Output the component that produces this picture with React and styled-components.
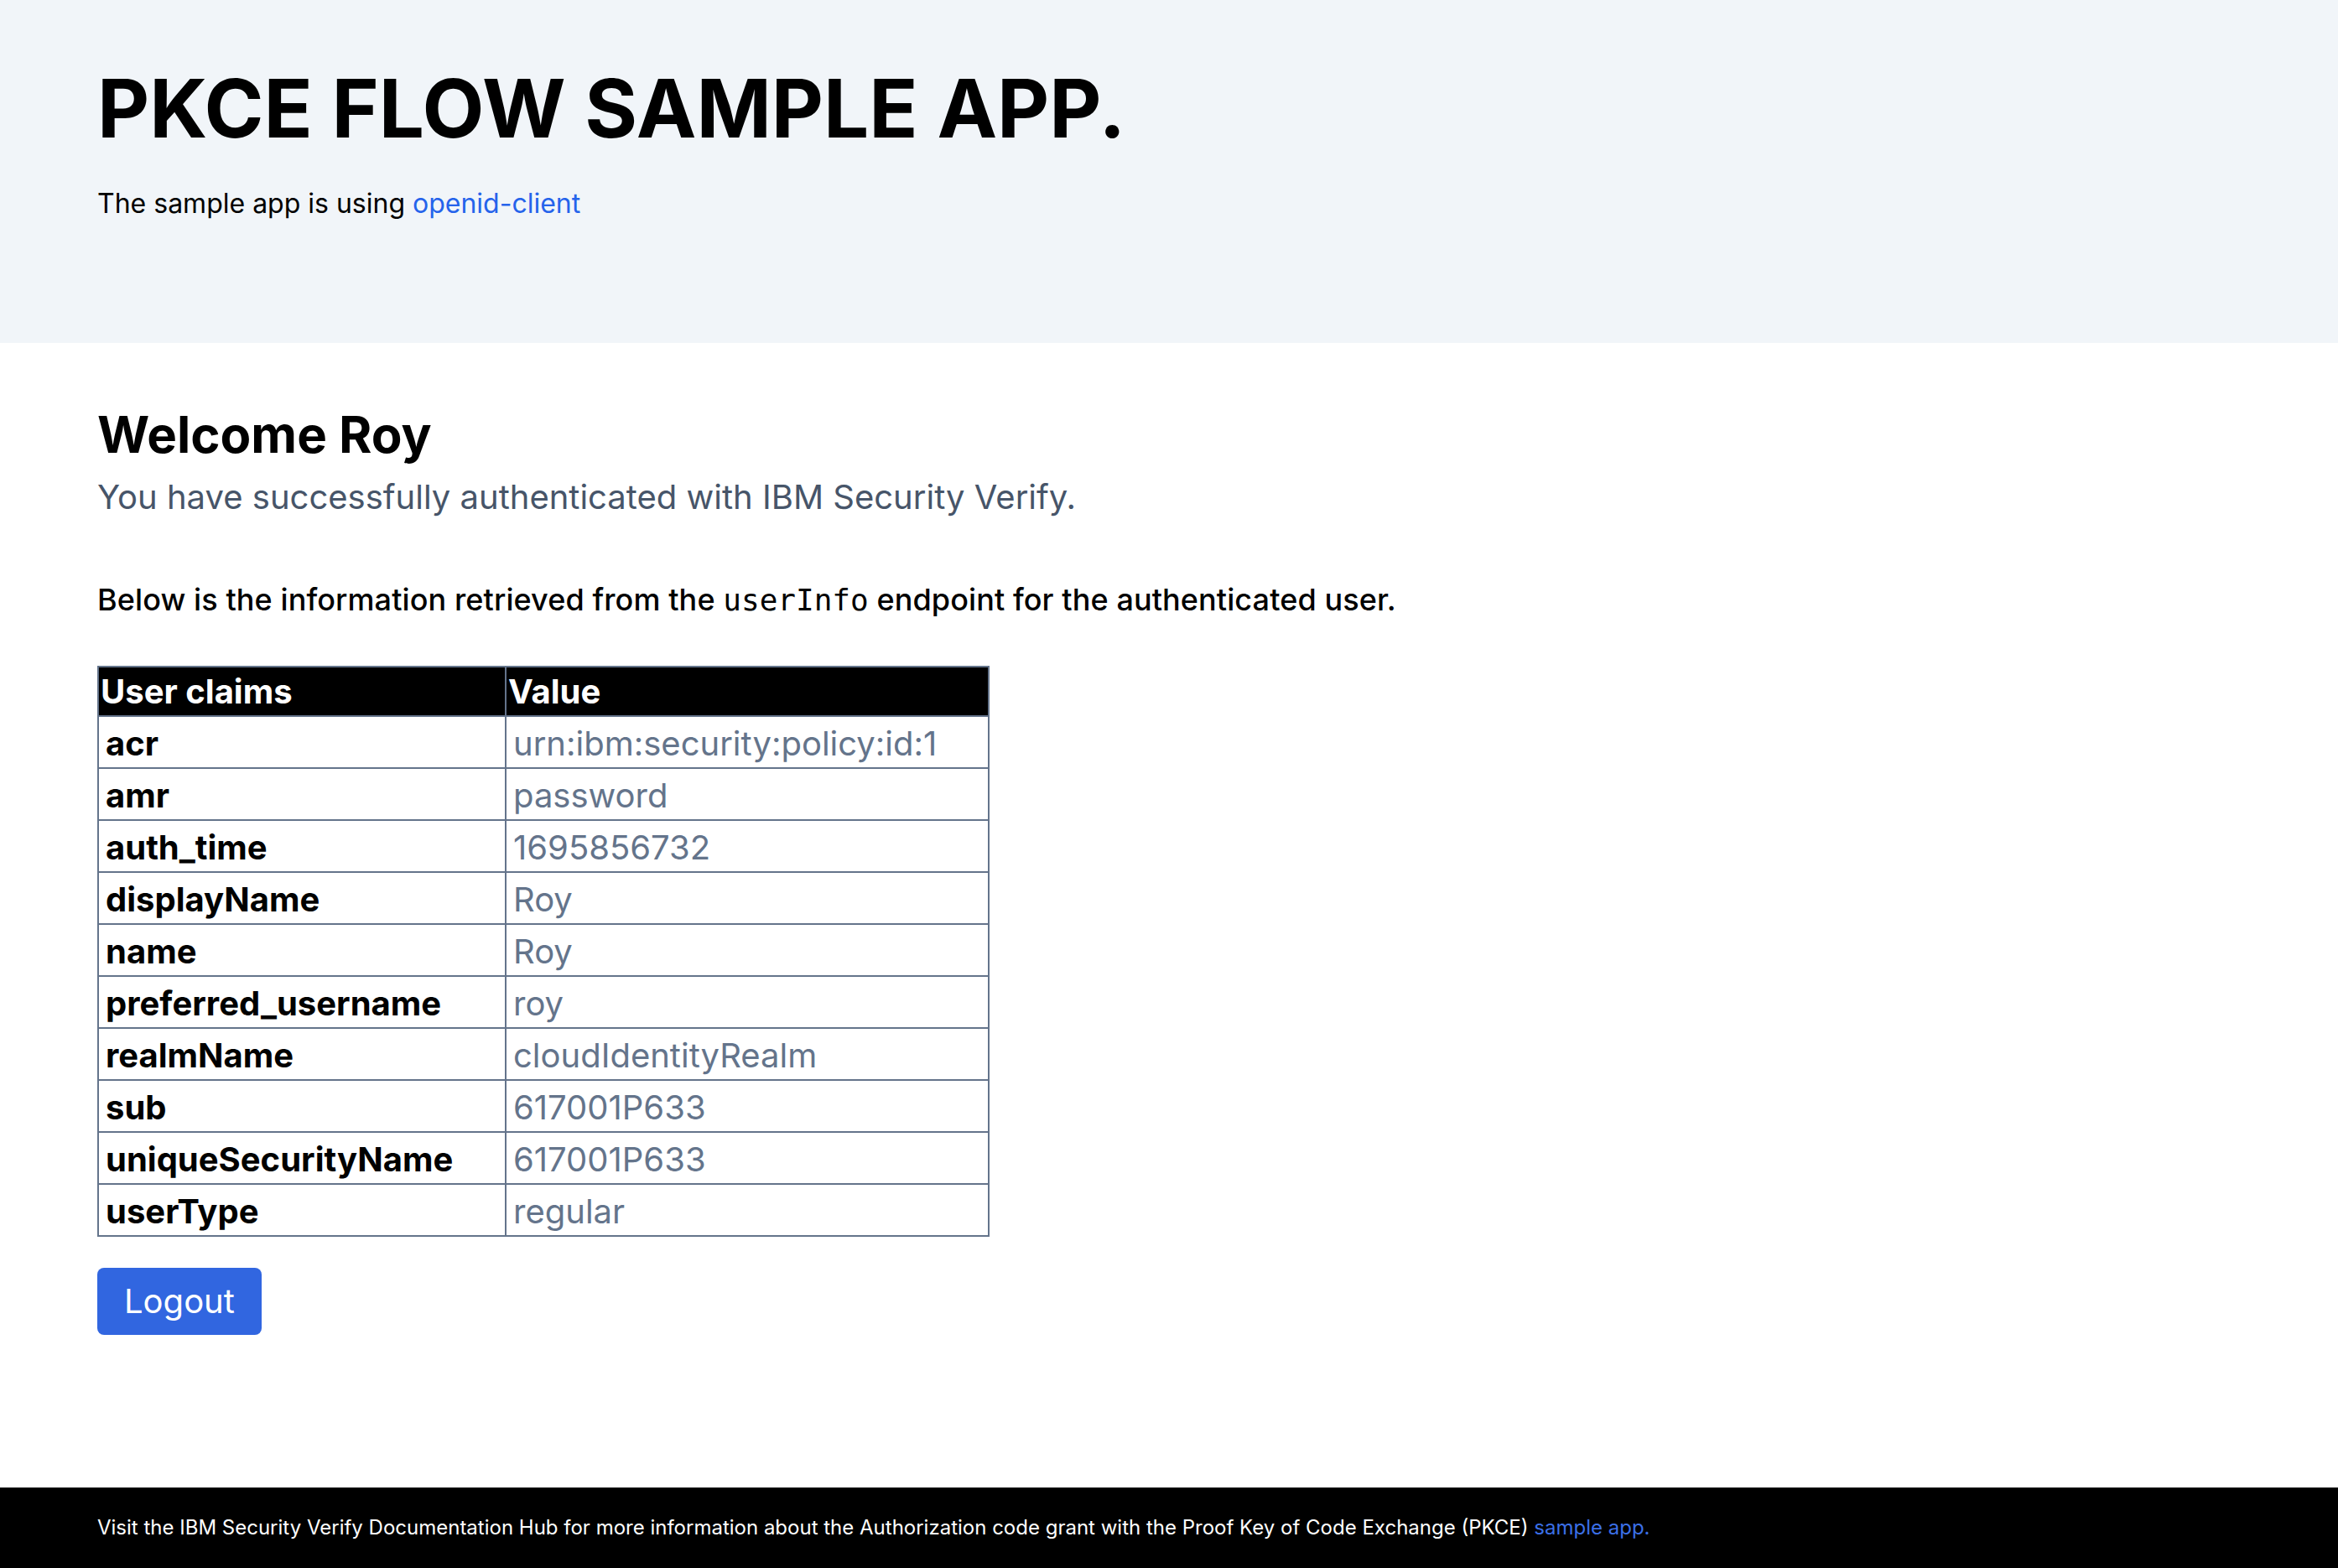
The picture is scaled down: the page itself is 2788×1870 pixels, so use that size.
import React from "react";
import styled, { createGlobalStyle } from "styled-components";

const GlobalStyle = createGlobalStyle`
  html, body { margin: 0; padding: 0; }
  body {
    font-family: Inter, "Noto Sans", "Liberation Sans", sans-serif;
    color: #000;
    background: #fff;
  }
  * { box-sizing: border-box; }
`;

const Page = styled.div`
  min-height: 100vh;
  display: flex;
  flex-direction: column;
`;

const Hero = styled.header`
  background: #f1f5f9;
  height: 409px;
  padding: 81px 116px 0;
`;

const Title = styled.h1`
  margin: 0;
  font-size: 96px;
  line-height: 96px;
  font-weight: 700;
`;

const Lead = styled.p`
  margin: 42px 0 0;
  font-size: 32px;
  line-height: 48px;
`;

const Link = styled.a`
  color: ${(p) => p.$color || "#2563eb"};
  text-decoration: none;
`;

const Main = styled.main`
  flex: 1;
  padding: 73px 116px 40px;
`;

const Welcome = styled.h2`
  margin: 0;
  font-size: 60px;
  line-height: 72px;
  font-weight: 700;
`;

const SubLead = styled.p`
  margin: 11px 0 0;
  font-size: 40px;
  line-height: 56px;
  color: #475569;
`;

const Intro = styled.p`
  margin: 70px 0 0;
  font-size: 36px;
  line-height: 48px;
  font-weight: 500;
  letter-spacing: 0.1px;
`;

const Code = styled.code`
  font-family: "DejaVu Sans Mono", "Liberation Mono", monospace;
  font-size: 36px;
  font-weight: 400;
  letter-spacing: 0;
`;

const Table = styled.table`
  margin-top: 54px;
  border-collapse: collapse;
  width: 1064px;
  border: 2px solid #64748b;
  font-size: 40px;
  line-height: 56px;
`;

const HeadCell = styled.th`
  background: #000;
  color: #fff;
  text-align: left;
  font-weight: 700;
  padding: 1px 2px 0;
  border: 2px solid #64748b;
  width: ${(p) => p.$width || "auto"};
`;

const KeyCell = styled.td`
  font-weight: 700;
  padding: 4px 8px 0;
  border: 2px solid #64748b;
`;

const ValueCell = styled.td`
  color: #64748b;
  padding: 4px 8px 0;
  border: 2px solid #64748b;
`;

const Button = styled.button`
  margin-top: 37px;
  display: block;
  background: #3166e0;
  color: #fff;
  border: none;
  border-radius: 8px;
  font-family: inherit;
  font-size: 40px;
  line-height: 56px;
  padding: 12px 32px;
  cursor: pointer;
`;

const Footer = styled.footer`
  background: #000;
  color: #fff;
  height: 96px;
  padding: 0 116px;
  display: flex;
  align-items: center;
  font-size: 24px;
  line-height: 32px;
`;

const claims = [
  ["acr", "urn:ibm:security:policy:id:1"],
  ["amr", "password"],
  ["auth_time", "1695856732"],
  ["displayName", "Roy"],
  ["name", "Roy"],
  ["preferred_username", "roy"],
  ["realmName", "cloudIdentityRealm"],
  ["sub", "617001P633"],
  ["uniqueSecurityName", "617001P633"],
  ["userType", "regular"],
];

export default function App() {
  return (
    <Page>
      <GlobalStyle />
      <Hero>
        <Title>PKCE FLOW SAMPLE APP.</Title>
        <Lead>
          The sample app is using <Link href="#">openid-client</Link>
        </Lead>
      </Hero>
      <Main>
        <Welcome>Welcome Roy</Welcome>
        <SubLead>You have successfully authenticated with IBM Security Verify.</SubLead>
        <Intro>
          Below is the information retrieved from the <Code>userInfo</Code> endpoint for the
          authenticated user.
        </Intro>
        <Table>
          <thead>
            <tr>
              <HeadCell $width="486px">User claims</HeadCell>
              <HeadCell>Value</HeadCell>
            </tr>
          </thead>
          <tbody>
            {claims.map(([k, v]) => (
              <tr key={k}>
                <KeyCell>{k}</KeyCell>
                <ValueCell>{v}</ValueCell>
              </tr>
            ))}
          </tbody>
        </Table>
        <Button>Logout</Button>
      </Main>
      <Footer>
        <span>
          Visit the IBM Security Verify Documentation Hub for more information about the
          Authorization code grant with the Proof Key of Code Exchange (PKCE){" "}
          <Link href="#" $color="#3b6fe6">sample app.</Link>
        </span>
      </Footer>
    </Page>
  );
}
